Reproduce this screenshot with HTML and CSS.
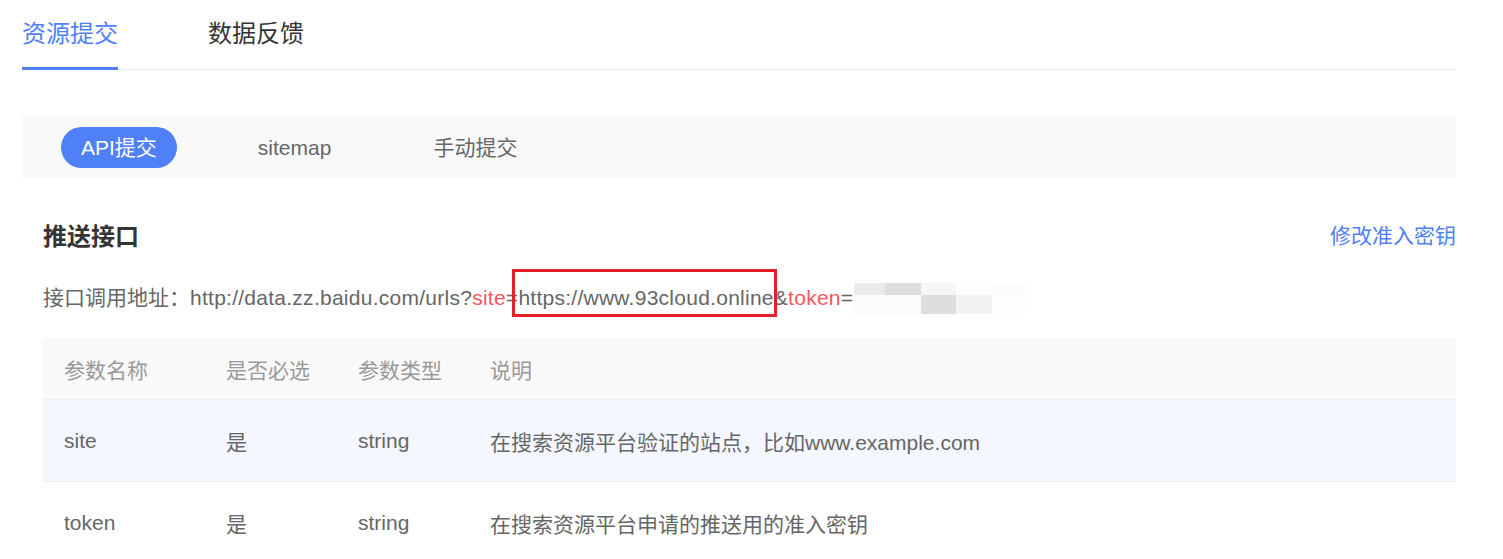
FILE: index.html
```html
<!DOCTYPE html>
<html lang="zh-CN">
<head>
<meta charset="utf-8">
<title>资源提交</title>
<link rel="stylesheet" href="styles.css">
</head>
<body>
<div class="page">
  <div class="tabs">
    <div class="tab active">资源提交</div>
    <div class="tab">数据反馈</div>
  </div>

  <div class="subtabs">
    <div class="subtab active">API提交</div>
    <div class="subtab">sitemap</div>
    <div class="subtab">手动提交</div>
  </div>

  <div class="content">
    <div class="section-head">
      <div class="section-title">推送接口</div>
      <a class="link">修改准入密钥</a>
    </div>

    <div class="api-url">接口调用地址：<span class="url">http://data.zz.baidu.com/urls?<span class="param">site</span>=<span class="hl">https://www.93cloud.online</span>&amp;<span class="param">token</span>=</span><span class="blur"><i class="c1"></i><i class="c2"></i><i class="c3"></i><i class="c4"></i><i class="c5"></i><i class="c6"></i><i class="c7"></i><i class="c8"></i><i class="c9"></i><i class="c10"></i></span></div>

    <div class="table">
      <div class="row head">
        <div class="cell w1">参数名称</div>
        <div class="cell w2">是否必选</div>
        <div class="cell w3">参数类型</div>
        <div class="cell w4">说明</div>
      </div>
      <div class="row hover">
        <div class="cell w1">site</div>
        <div class="cell w2">是</div>
        <div class="cell w3">string</div>
        <div class="cell w4">在搜索资源平台验证的站点，比如www.example.com</div>
      </div>
      <div class="row">
        <div class="cell w1">token</div>
        <div class="cell w2">是</div>
        <div class="cell w3">string</div>
        <div class="cell w4">在搜索资源平台申请的推送用的准入密钥</div>
      </div>
    </div>
  </div>
</div>
</body>
</html>
```

FILE: styles.css
```css
html, body {
  margin: 0;
  padding: 0;
  background: #ffffff;
}
body {
  font-family: "Liberation Sans", "Noto Sans CJK SC", sans-serif;
  color: #666666;
  font-size: 21px;
}
.page {
  width: 1434px;
  margin-left: 22px;
}
.tabs {
  display: flex;
  gap: 90px;
  height: 70px;
  border-bottom: 1px solid #eeeeee;
  box-sizing: border-box;
}
.tab {
  font-size: 24px;
  line-height: 67px;
  height: 70px;
  box-sizing: border-box;
  color: #333333;
  border-bottom: 3px solid transparent;
}
.tab.active {
  color: #4f80f8;
  border-bottom-color: #4f80f8;
}
.subtabs {
  margin-top: 46px;
  height: 62px;
  background: #f9f9f9;
  display: flex;
  align-items: center;
  gap: 60px;
  padding-left: 39px;
}
.subtab {
  height: 41px;
  line-height: 41px;
  padding: 0 21px;
  border-radius: 21px;
  color: #666666;
}
.subtab.active {
  background: #4f80f8;
  color: #ffffff;
  padding: 0 20px;
}
.content {
  margin-left: 21px;
}
.section-head {
  margin-top: 38px;
  height: 36px;
  display: flex;
  justify-content: space-between;
  align-items: center;
}
.section-title {
  font-size: 24px;
  font-weight: bold;
  color: #333333;
}
.link {
  color: #4f80f8;
  font-size: 21px;
}
.api-url {
  margin-top: 28px;
  height: 36px;
  line-height: 36px;
  white-space: nowrap;
}
.url {
  letter-spacing: 0.26px;
}
.param {
  color: #f25660;
}
.hl {
  position: relative;
}
.hl::after {
  content: "";
  position: absolute;
  left: -6px;
  right: -3px;
  top: -17px;
  bottom: -8px;
  border: 3px solid #e5202a;
}
.blur {
  display: inline-grid;
  grid-template-columns: 31px 36px 35px 36px 34px;
  grid-template-rows: 12px 19px;
  vertical-align: top;
  margin-top: 3px;
  margin-left: 1px;
}
.blur i { display: block; }
.c1 { background: #ebebeb; }
.c2 { background: #dededd; }
.c3 { background: #f6f6f6; }
.c4 { background: #fdfdfd; }
.c5 { background: #fcfcfc; }
.c6 { background: #fcfcfc; }
.c7 { background: #fbfbfb; }
.c8 { background: #dcdddc; }
.c9 { background: #f2f2f2; }
.c10 { background: #fdfdfd; }
.table {
  margin-top: 22px;
}
.row {
  display: flex;
  height: 82px;
  align-items: center;
  border-bottom: 1px solid #eeeeee;
  box-sizing: border-box;
}
.row.head {
  height: 62px;
  background: #f9f9f9;
  color: #999999;
}
.row.hover {
  background: #f4f7fe;
}
.cell {
  padding-left: 21px;
  box-sizing: border-box;
  white-space: nowrap;
}
.w1 { width: 162px; }
.w2 { width: 132px; }
.w3 { width: 132px; }
.w4 { flex: 1; }
```
